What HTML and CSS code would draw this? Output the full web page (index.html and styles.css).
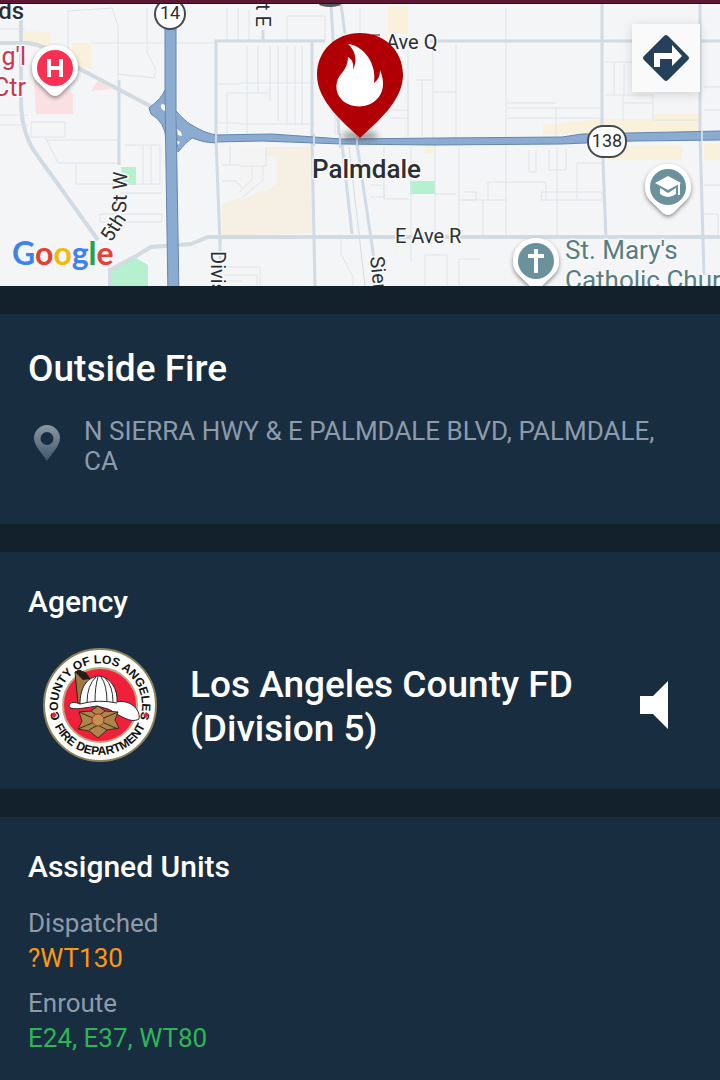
FILE: index.html
```
<!DOCTYPE html>
<html lang="en">
<head>
    <meta charset="UTF-8">
    <meta name="viewport" content="width=device-width, initial-scale=1.0">
    <title>Incident Details</title>
    <link rel="stylesheet" href="styles.css">
</head>
<body>
    <div class="status-strip"></div>
    <div class="map">
        <svg class="map-canvas" viewBox="0 4 720 282" preserveAspectRatio="xMidYMid slice" role="img" aria-label="Map of Palmdale">
            <defs>
                <filter id="pinShadow" x="-30%" y="-30%" width="160%" height="160%">
                    <feDropShadow dx="0" dy="2" stdDeviation="2" flood-color="#000" flood-opacity="0.45"/>
                </filter>
                <filter id="soft" x="-50%" y="-50%" width="200%" height="200%">
                    <feGaussianBlur stdDeviation="3"/>
                </filter>
                <path id="poi" d="M0-23C13-23 23-13 23 0C23 12 15 15 6 25Q0 31-6 25C-15 15-23 12-23 0C-23-13-13-23 0-23Z"/>
            </defs>
            <rect y="4" width="720" height="282" fill="#f4f5f6"/>

            <!-- commercial areas -->
            <g fill="#faf1dc">
                <path d="M24 31l26 1 3 20-29-8zM72 43h19v27l-19-5zM388 6h20v28h-20z"/>
                <path d="M240 147h73v86l-91 3v-32l18-6z" fill="#f6f0e4"/>
                <path d="M240 147h25v9l12 1v24q-2 8-18 11l-19 9z" fill="#f4f4f4"/>
                <path d="M543 125l58-6h52l2-5h45v20H543zM608 146h74v14h-74zM704 144h16v16h-16z"/>
                <path d="M425 147h8v7h-8z"/>
            </g>
            <!-- hospital grounds -->
            <path d="M34 80h32l7 16v18H36zM98 80l14 9-21 2z" fill="#fbe0e1"/>
            <!-- parks -->
            <path d="M121 167h15v18h-13zM410 181h25v13h-25zM112 286v-17l24-11 12 7v21z" fill="#b5f0cf"/>

            <!-- small streets -->
            <g fill="none" stroke="#e0e4e8">
                <path d="M68 10v70M68 11l44-3 6 18v55M147 8v44l9 18-2 8-36-4M0 29h25M0 115h28M0 125h28M31 122h34v15H31zM45 137l13 26h62M46 140h72v22M76 163v21h84M125 145h35v40M143 145v40M151 145v40M100 214h62v8h-62zM120 193h42"/>
                <path d="M91 43h125M227 8v34M238 8v34M217 84h23M227 93v50M227 93h13M217 123h23M230 145v20M222 165h18M222 181h14l6 7M224 267h36v19M224 275h33v11M222 281h20"/>
                <path d="M249 10v32M287 16h38v24h-38zM247 46v89M258 46v47M270 46v55M278 46v75M287 46v77M295 46v78M302 46v80M240 83h75M240 93h30M240 124h75M360 8v24M408 50v87M416 80h16M408 80v56M422 80v56M390 110h18M390 118h18M433 50v90M433 92h23M456 45v95M335 45v90"/>
                <path d="M341 235v19l12 23v9M370 185h14v14h25M384 147v52M411 147v115M435 145v92M435 194h21M459 145v90M459 200h21M464 192h12v8h-12M370 197h15M425 255h22v31M425 255v31M459 286v-27h21"/>
                <path d="M506 8v228M506 103h50M507 108h93M556 108v33M507 118h93M605 62h48v30M614 62v34M624 64v30M605 95h48v26M623 95v26M624 103h29M655 120h45M704 87h16M704 110h16"/>
                <path d="M480 200h27M483 200v35M488 182h58v18M488 182v18M529 150v22h7v-22M549 150v20h17v-20M542 192h60v8h-61zM577 163h26v20M577 163v36M557 147v90M704 185h16M704 214h14v22"/>
                <path d="M240 166h26v-18M252 167v12l-12 13M263 166v14l-20 17"/>
            </g>

            <!-- main streets -->
            <g fill="none" stroke="#d2dbe2" stroke-width="4">
                <path d="M0 43h28q18 2 35 17l89 47M21 20v80q0 30 13 51l64 89"/>
                <path d="M119 80v85" stroke-width="3"/>
                <path d="M110 270l26-14 15-9 40-3 17-7h512" stroke-width="4"/>
                <path d="M110 268v18" stroke-width="4"/>
                <path d="M240 41h-24v99l4 103M240 41h85M430 41h290M263 30v12M312 40v100l3 146" stroke-width="3"/>
                <path d="M341 4l4 30M602 4v130l4 105M700 4v131l4 140" stroke-width="3"/>
                <path d="M331 5l8 130M342 144l10 90M357 144l17 115" stroke-width="3"/>
                <path d="M349 147l16 139" stroke-width="1"/>
                <path d="M220 239v47" stroke-width="3"/>
            </g>
            <ellipse cx="330" cy="4" rx="11" ry="3" fill="#555b60"/>

            <!-- highways 14 and 138 -->
            <g fill="#8babd0" stroke="#6485b0">
                <path d="M165 90q-3 8-16 18l2 6q14 8 15 25V90zM176 111q9 10 14 13 14 9 26 11v8q-12 0-24-5-6 4-14 14z"/>
                <path d="M215 135l57-1 70 5 100-1 120-1 20-3 140-3v9l-88 1-72 3-130 1-90-1-80-3-47 1z"/>
                <path d="M165 10h11v100l3 186h-11l-2-130-1-70z"/>
            </g>
            <path d="M176 112q9 10 15 13l-1 13-12 11zM214 136h5v6h-5z" fill="#8babd0"/>
            <path d="M162 104l3 1v6q-5-2-4-6zM177 129l4 3 1 4-4-1zM177 141l3 1-2 3z" fill="#fff"/>
            <path d="M216 134v10M314 134v12M340 134v14M357 136v12M702 131v10" stroke="#d0dae4" stroke-width="2"/>

            <!-- shields -->
            <g class="shield">
                <circle cx="170" cy="14" r="15"/>
                <rect x="588" y="126" width="38" height="31" rx="15"/>
                <text x="170" y="19">14</text>
                <text x="607" y="147">138</text>
            </g>

            <!-- street labels -->
            <g class="street">
                <text x="386" y="49">Ave Q</text>
                <text x="395" y="243">E Ave R</text>
                <text transform="translate(256 4) rotate(90)">t E</text>
                <text transform="translate(211 251) rotate(90)">Divis</text>
                <text transform="translate(370 257) rotate(84)">Sierra</text>
                <text transform="translate(126 213) rotate(-88)">St W</text>
                <text transform="translate(111 243) rotate(-57)">5th</text>
            </g>
            <text class="city" x="312" y="178">Palmdale</text>
            <text class="town" x="24" y="19" text-anchor="end">ds</text>
            <g class="hospital" text-anchor="end">
                <text x="26" y="65">g'l</text>
                <text x="26" y="96">Ctr</text>
            </g>
            <g class="church">
                <text x="565" y="259">St. Mary's</text>
                <text x="565" y="289">Catholic Church</text>
            </g>

            <!-- hospital pin -->
            <g transform="translate(55 68)">
                <use href="#poi" fill="#fff" filter="url(#pinShadow)"/>
                <circle r="18" fill="#f92f54"/>
                <path d="M-6-9v18M6-9v18M-6 0h12" stroke="#fff" stroke-width="4"/>
            </g>
            <!-- school pin -->
            <g transform="translate(668 187)">
                <use href="#poi" fill="#fff" filter="url(#pinShadow)"/>
                <circle r="18" fill="#6b919c"/>
                <path d="M-13-4L0-11 13-4 0 3zM-8 1l8 5 8-5v6q-8 6-16 0zM10-4h2v12h-2z" fill="#fff"/>
            </g>
            <!-- church pin -->
            <g transform="translate(536 261)">
                <use href="#poi" fill="#fff" filter="url(#pinShadow)"/>
                <circle r="18" fill="#6b919c"/>
                <path d="M0-12v24M-8-5H8" stroke="#fff" stroke-width="4"/>
            </g>

            <!-- incident marker -->
            <ellipse cx="360" cy="136" rx="18" ry="5" fill="#444" opacity="0.5" filter="url(#soft)"/>
            <path d="M360 138C344 123 317 101 317 75C317 50 336 33 360 33S403 50 403 75C403 101 376 123 360 138Z" fill="#b00005"/>
            <path d="M372 35h8" stroke="#5c0b10" stroke-width="1"/>
            <path d="M348 44C365 46 377 65 374 83C378 80 380 76 380 70C385 82 384 93 376 100C367 109 350 108 342 100C334 92 335 80 342 73C346 68 348 63 348 57C353 60 354 65 353 70C358 60 355 50 348 44Z" fill="#fff"/>

            <text class="google" x="12" y="265"><tspan fill="#3f82ee">G</tspan><tspan fill="#e04336">o</tspan><tspan fill="#f0b90b">o</tspan><tspan fill="#3f82ee">g</tspan><tspan fill="#25a14c">l</tspan><tspan fill="#e04336">e</tspan></text>
        </svg>
        <button class="directions" type="button" aria-label="Directions">
            <svg viewBox="0 0 48 48" width="48" height="48">
                <path d="M22 2q2-2 4 0l20 20q2 2 0 4L26 46q-2 2-4 0L2 26q-2-2 0-4z" fill="#24405a"/>
                <path d="M12 33V19h18v-8l10 11-10 10v-7H18v8z" fill="#fff"/>
            </svg>
        </button>
    </div>

    <main class="details">
        <section class="card incident">
            <h1>Outside Fire</h1>
            <div class="address">
                <svg class="address-pin" viewBox="0 0 26 36" width="26" height="36" aria-hidden="true">
                    <defs>
                        <linearGradient id="pinFill" x2="0" y2="1">
                            <stop offset="0" stop-color="#8c97a3"/>
                            <stop offset="1" stop-color="#3f566c"/>
                        </linearGradient>
                    </defs>
                    <path fill-rule="evenodd" d="M13 0c7 0 13 6 13 13 0 8-8 15-13 23C8 28 0 21 0 13 0 6 6 0 13 0zm0 7a6 6 0 1 0 0 13 6 6 0 0 0 0-13z" fill="url(#pinFill)"/>
                </svg>
                <p>N SIERRA HWY &amp; E PALMDALE BLVD, PALMDALE, CA</p>
            </div>
        </section>

        <section class="card agency">
            <h2>Agency</h2>
            <div class="agency-row">
                <svg class="seal" viewBox="0 0 116 116" width="116" height="116" role="img" aria-label="County of Los Angeles Fire Department seal">
                    <defs>
                        <path id="arcTop" d="M22 80A42 42 0 1 1 94 80"/>
                        <path id="arcBottom" d="M8 58A50 50 0 0 0 108 58"/>
                    </defs>
                    <circle cx="58" cy="58" r="56" fill="#fffefa" stroke="#8b8360" stroke-width="2"/>
                    <circle cx="58" cy="58" r="37" fill="#ef2039" stroke="#c3a183" stroke-width="2"/>
                    <g class="seal-text">
                        <text text-anchor="middle"><textPath href="#arcTop" startOffset="50%">COUNTY OF LOS ANGELES</textPath></text>
                        <text text-anchor="middle"><textPath href="#arcBottom" startOffset="50%">FIRE DEPARTMENT</textPath></text>
                    </g>
                    <path d="M12 65l3 3-3 3-3-3zM104 65l3 3-3 3-3-3z" fill="#d9243c"/>
                    <!-- helmet -->
                    <path d="M33 25l4-2 7 3 4 6-7 28-5-3z" fill="#a17940" stroke="#2b2115"/>
                    <path d="M33 25l4-2 7 3 4 6-7 1z" fill="#241d18"/>
                    <path d="M38 57C38 42 44 30 57 29C69 30 76 43 75 55C87 52 99 62 97 72C88 77 78 68 66 62L55 59C42 61 28 64 27 59C28 54 33 55 38 57z" fill="#fff" stroke="#2a2325" stroke-width="1"/>
                    <path d="M38 57q18-5 37-1M45 56q0-18 9-26M53 55q0-16 3-25M65 55q0-17-6-25M71 55q0-16-8-24" fill="none" stroke="#312b2c" stroke-width="1"/>
                    <!-- maltese cross -->
                    <path d="M37 65l12-1 7-5 7 5 13 1-3 8 4 8-12 2-9 8-9-7-11-2 4-8z" fill="#ad8449" stroke="#3b2b1a"/>
                    <path d="M37 65l39 17M76 65L36 82M49 64l7 5 7-5M65 83l-9-5-9 5" fill="none" stroke="#3b2b1a" stroke-width="1"/>
                    <circle cx="56" cy="73" r="6" fill="#c39250" stroke="#a9352c" stroke-width="1"/>
                </svg>
                <p class="agency-name">Los Angeles County FD (Division 5)</p>
                <button class="speaker" type="button" aria-label="Listen to radio">
                    <svg viewBox="0 0 28 48" width="28" height="48"><path d="M0 15h13L28 0v48L13 33H0z" fill="#fff"/></svg>
                </button>
            </div>
        </section>

        <section class="card units">
            <h2>Assigned Units</h2>
            <dl>
                <dt>Dispatched</dt>
                <dd class="dispatched">?WT130</dd>
                <dt>Enroute</dt>
                <dd class="enroute">E24, E37, WT80</dd>
            </dl>
        </section>
    </main>
</body>
</html>
```

FILE: styles.css
```
* {
    box-sizing: border-box;
}
body {
    margin: 0;
    min-height: 100vh;
    display: flex;
    flex-direction: column;
    font-family: Roboto, "Liberation Sans", sans-serif;
    background-color: #13212d;
    color: #fff;
}
h1, h2, p, dl, dd {
    margin: 0;
}
h1, h2 {
    font-weight: 500;
}
button {
    padding: 0;
    border: none;
    background: none;
    cursor: pointer;
}
svg {
    display: block;
}
.status-strip {
    height: 4px;
    background-color: #5c1832;
    border-bottom: 1px solid #17171d;
}

/* Map */
.map {
    position: relative;
}
.map-canvas {
    width: 100%;
    height: 282px;
}
.map text {
    paint-order: stroke;
    stroke: #f8f9fa;
    stroke-width: 3px;
    stroke-linejoin: round;
    fill: #2b2f33;
}
.map .street {
    font-size: 20px;
}
.map .city {
    font-size: 26px;
    font-weight: 500;
}
.map .town {
    font-size: 24px;
    font-weight: 500;
}
.map .hospital text {
    font-size: 25px;
    fill: #c43850;
}
.map .church text {
    font-size: 26px;
    fill: #587d82;
}
.shield circle,
.shield rect {
    fill: #fff;
    stroke: #46494d;
    stroke-width: 2px;
}
.map .shield text {
    font-size: 18px;
    text-anchor: middle;
    stroke: none;
}
.map .google {
    font-family: Lato, sans-serif;
    font-size: 32px;
    font-weight: 700;
}
.map .google tspan {
    stroke: none;
}
.directions {
    position: absolute;
    top: 20px;
    right: 20px;
    width: 68px;
    height: 68px;
    display: flex;
    align-items: center;
    justify-content: center;
    background-color: #fafafa;
    box-shadow: 0 2px 10px rgba(0, 0, 0, 0.15);
}

/* Cards */
.details {
    flex: 1;
    display: flex;
    flex-direction: column;
    gap: 28px;
    padding-top: 28px;
}
.card {
    padding: 32px 28px;
    background-color: #182d3f;
}
.incident {
    padding-bottom: 48px;
}
h1 {
    font-size: 37px;
    line-height: 46px;
}
.address {
    display: flex;
    gap: 24px;
    padding-left: 6px;
    margin-top: 24px;
    font-size: 26px;
    line-height: 30px;
    color: #8e9bab;
}
.address-pin {
    flex: none;
    margin-top: 9px;
}
h2 {
    font-size: 30px;
    line-height: 36px;
}
.agency {
    padding-bottom: 26px;
}
.agency-row {
    display: flex;
    align-items: center;
    gap: 32px;
    margin-top: 27px;
    padding: 0 24px 0 14px;
}
.seal {
    flex: none;
}
.seal-text text {
    font-family: "Liberation Sans", sans-serif;
    font-size: 12px;
    font-weight: 700;
    fill: #111;
}
.agency-name {
    flex: 1;
    padding-top: 4px;
    font-size: 37px;
    font-weight: 500;
    line-height: 44px;
}
.units {
    flex: 1;
}
dl {
    margin-top: 21px;
    font-size: 26px;
    line-height: 35px;
}
dt {
    color: #8e9bab;
}
dd + dt {
    margin-top: 10px;
}
.dispatched {
    color: #ff9811;
}
.enroute {
    color: #2fb457;
}
```
